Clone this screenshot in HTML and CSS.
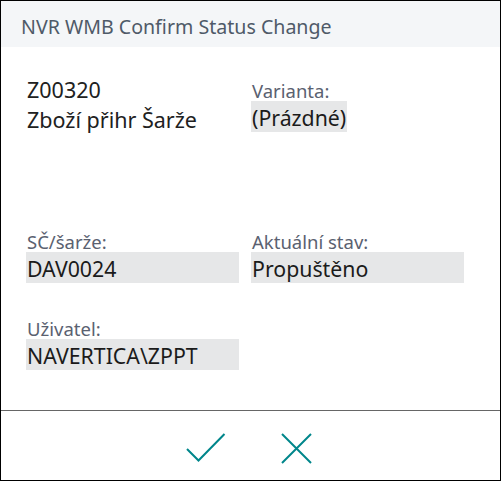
FILE: index.html
```html
<!DOCTYPE html>
<html lang="cs">
<head>
<meta charset="utf-8">
<title>NVR WMB Confirm Status Change</title>
<link rel="stylesheet" href="styles.css">
</head>
<body>
<div class="dialog">
  <div class="header">NVR WMB Confirm Status Change</div>
  <div class="content">
    <div class="grid">
      <div class="item-info">
        <div class="big">Z00320</div>
        <div class="big">Zboží přihr Šarže</div>
      </div>
      <div class="field variant">
        <div class="label">Varianta:</div>
        <div class="value fit">(Prázdné)</div>
      </div>
      <div class="field">
        <div class="label">SČ/šarže:</div>
        <div class="value">DAV0024</div>
      </div>
      <div class="field">
        <div class="label">Aktuální stav:</div>
        <div class="value">Propuštěno</div>
      </div>
      <div class="field">
        <div class="label">Uživatel:</div>
        <div class="value">NAVERTICA\ZPPT</div>
      </div>
    </div>
  </div>
  <div class="footer">
    <button class="action" aria-label="OK">
      <svg width="40" height="30" viewBox="0 0 40 30"><polyline points="1,16 12.5,27.5 38.5,1" fill="none" stroke="#00868b" stroke-width="2"/></svg>
    </button>
    <button class="action" aria-label="Zrušit">
      <svg width="31" height="31" viewBox="0 0 31 31"><path d="M1 1 L30 30 M30 1 L1 30" fill="none" stroke="#00868b" stroke-width="2"/></svg>
    </button>
  </div>
</div>
</body>
</html>
```
FILE: styles.css
```css
* { box-sizing: border-box; }
html, body { margin: 0; padding: 0; background: #fff; }
body { font-family: "Noto Sans", "Open Sans", sans-serif; }
.dialog {
  width: 501px;
  height: 481px;
  border: 1px solid #000;
  display: flex;
  flex-direction: column;
}
.header {
  height: 46px;
  flex: none;
  background: #f4f6f8;
  color: #4f5a68;
  font-size: 19.6px;
  padding: 13px 0 0 20px;
  line-height: 26px;
}
.content {
  flex: 1;
  padding: 28px 0 0 25px;
}
.grid {
  display: grid;
  grid-template-columns: 213px 213px;
  column-gap: 12px;
  grid-template-rows: 158px 87px 40px;
}
.big {
  font-size: 21.5px;
  line-height: 30px;
  color: #212121;
  padding-left: 1px;
}
.field { display: flex; flex-direction: column; align-items: flex-start; }
.variant { padding-top: 7px; }
.label {
  font-size: 18.5px;
  line-height: 17px;
  height: 17px;
  margin-bottom: 2px;
  color: #5a6170;
  padding-left: 1px;
}
.value {
  align-self: stretch;
  background: #e6e7e8;
  font-size: 21.3px;
  line-height: 31px;
  height: 31px;
  color: #1b1b1b;
  padding-left: 1px;
  padding-top: 1px;
}
.value.fit { align-self: flex-start; padding-right: 1px; }
.footer {
  height: 70px;
  flex: none;
  border-top: 1px solid #666;
  display: flex;
  justify-content: center;
  align-items: flex-start;
  gap: 55px;
  padding-top: 22px;
  padding-right: 3px;
}
.action {
  background: none;
  border: 0;
  padding: 0;
  margin: 0;
  display: flex;
  cursor: pointer;
}
```
